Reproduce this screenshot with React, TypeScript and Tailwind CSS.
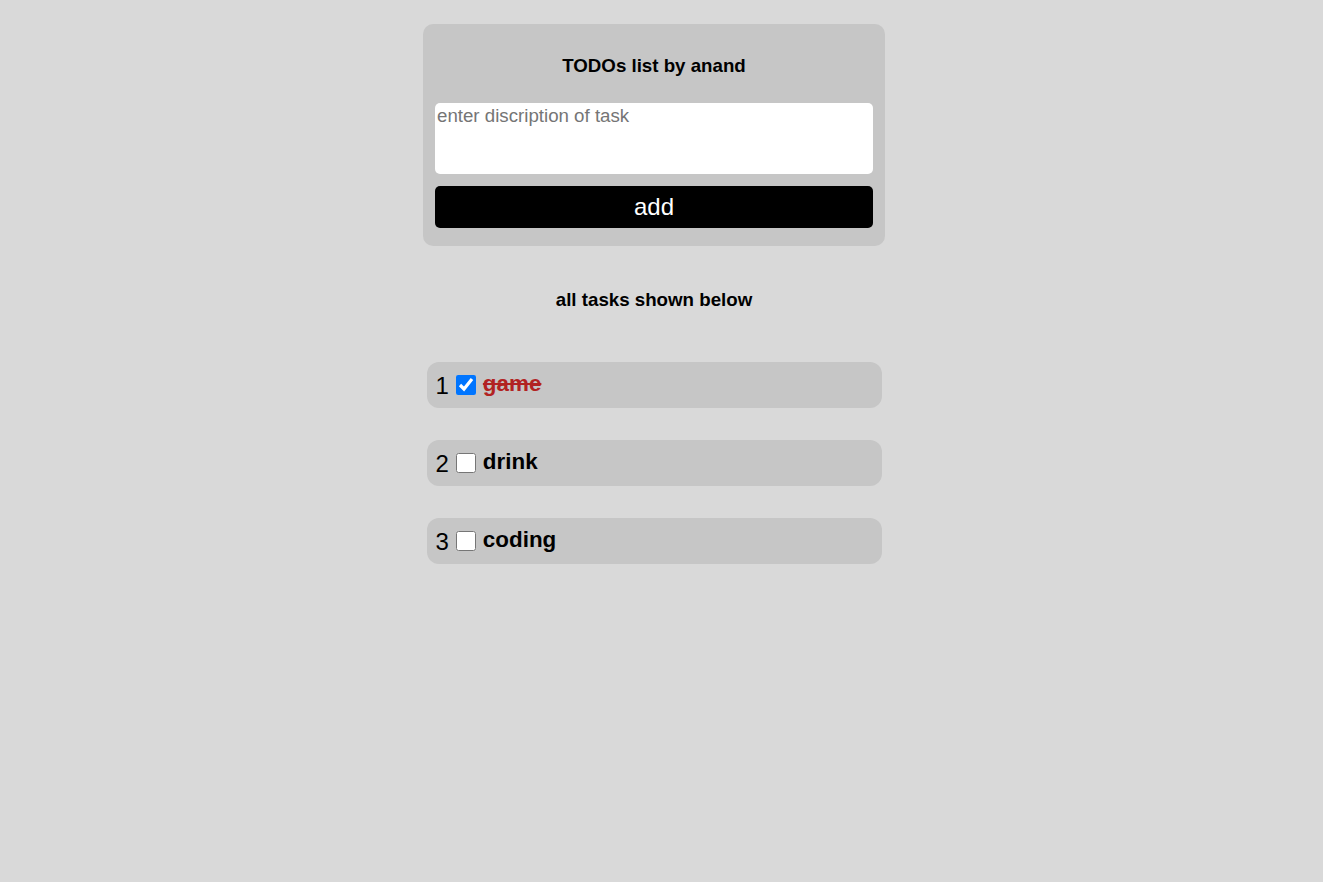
import React from "react";

const tasks = [
  { id: 1, text: "game", done: true },
  { id: 2, text: "drink", done: false },
  { id: 3, text: "coding", done: false },
];

export default function App() {
  return (
    <div
      className="min-h-screen w-full bg-[#d9d9d9] flex flex-col items-center pt-[24px] pr-[15px]"
      style={{ fontFamily: '"Liberation Sans", Arial, sans-serif' }}
    >
      <div className="w-[462px] bg-[#c6c6c6] rounded-[10px] px-[12px] pt-[32px] pb-[18px] flex flex-col">
        <h3 className="text-[18.72px] leading-[20px] font-bold text-black text-center mb-[27px]">
          TODOs list by anand
        </h3>
        <textarea
          placeholder="enter discription of task"
          className="w-full h-[71px] bg-white rounded-[5px] px-[2px] pt-[2px] text-[18.7px] leading-[22px] resize-none outline-none placeholder:text-[#757575] text-black"
        />
        <button className="mt-[12px] w-full h-[42px] bg-black rounded-[5px] text-white text-[24px] leading-[28px]">
          add
        </button>
      </div>

      <h3 className="mt-[44px] text-[18.72px] leading-[20px] font-bold text-black text-center">
        all tasks shown below
      </h3>

      <div className="mt-[52px] w-[455px] flex flex-col gap-[32px]">
        {tasks.map((t) => (
          <div
            key={t.id}
            className="h-[46px] bg-[#c6c6c6] rounded-[12px] flex items-center pl-[9px]"
          >
            <span className="text-[24px] leading-[28px] text-black mt-[1px]">{t.id}</span>
            <input
              type="checkbox"
              defaultChecked={t.done}
              className="w-[20px] h-[20px] ml-[7px] -mt-[1px]"
            />
            <span
              className={
                "ml-[7px] text-[22.4px] leading-[26px] font-bold -mt-[2px] " +
                (t.done ? "line-through text-[#b22222]" : "text-black")
              }
            >
              {t.text}
            </span>
          </div>
        ))}
      </div>
    </div>
  );
}
